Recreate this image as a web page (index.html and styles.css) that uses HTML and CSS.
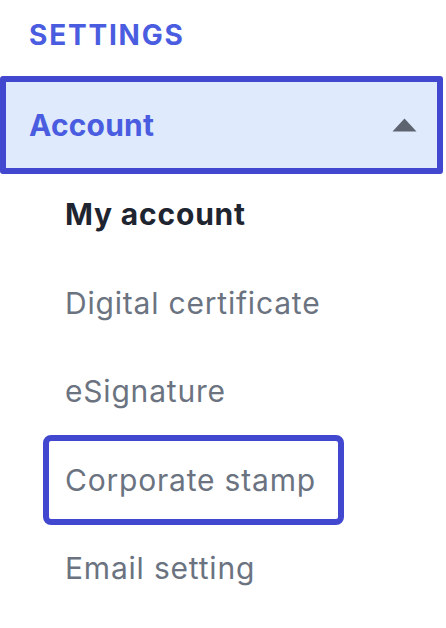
FILE: index.html
```html
<!DOCTYPE html>
<html lang="en">
<head>
<meta charset="utf-8">
<title>Settings</title>
<link rel="stylesheet" href="styles.css">
</head>
<body>
<nav class="sidebar">
  <h2 class="section-title">SETTINGS</h2>
  <div class="group">
    <button class="group-header" type="button">
      <span class="group-label">Account</span>
      <svg class="caret" width="25" height="14" viewBox="0 0 25 14" aria-hidden="true">
        <path d="M12.5 0.5 L24.5 13.5 L0.5 13.5 Z" fill="#5d6470"/>
      </svg>
    </button>
    <ul class="sub-list">
      <li class="sub-item is-active">My account</li>
      <li class="sub-item">Digital certificate</li>
      <li class="sub-item">eSignature</li>
      <li class="sub-item is-focused">Corporate stamp</li>
      <li class="sub-item">Email setting</li>
    </ul>
  </div>
</nav>
</body>
</html>
```

FILE: styles.css
```css
html, body {
  margin: 0;
  padding: 0;
  background: #ffffff;
}

body {
  font-family: Inter, "Noto Sans", "Liberation Sans", sans-serif;
  width: 446px;
  height: 628px;
  overflow: hidden;
}

.sidebar {
  display: flex;
  flex-direction: column;
}

.section-title {
  margin: 0;
  padding: 18px 0 0 29px;
  height: 76px;
  box-sizing: border-box;
  font-size: 28px;
  font-weight: 700;
  color: #4a5de0;
  line-height: 34px;
  letter-spacing: 1.8px;
}

.group {
  display: flex;
  flex-direction: column;
}

.group-header {
  display: flex;
  align-items: center;
  justify-content: space-between;
  box-sizing: border-box;
  width: 443px;
  height: 98px;
  margin: 0;
  padding: 0 20px 0 23px;
  border: 6px solid #4147cf;
  border-radius: 3px;
  background: #dfebfd;
  font: inherit;
  cursor: pointer;
  text-align: left;
}

.group-label {
  font-size: 30px;
  font-weight: 700;
  letter-spacing: 0.2px;
  color: #4a5de0;
}

.caret {
  display: block;
  margin-top: -1px;
}

.sub-list {
  list-style: none;
  margin: 0;
  padding: 1px 0 0 49px;
  display: flex;
  flex-direction: column;
  align-items: flex-start;
  gap: 10.5px;
}

.sub-item {
  display: flex;
  align-items: center;
  box-sizing: border-box;
  height: 78px;
  padding: 0 22px 0 16px;
  font-size: 30px;
  letter-spacing: 0.8px;
  color: #6b7381;
  white-space: nowrap;
}

.sub-item.is-active {
  font-weight: 700;
  letter-spacing: 0.8px;
  color: #1f2530;
}

.sub-item.is-focused {
  outline: 6px solid #4147cf;
  border-radius: 2px;
}
```
